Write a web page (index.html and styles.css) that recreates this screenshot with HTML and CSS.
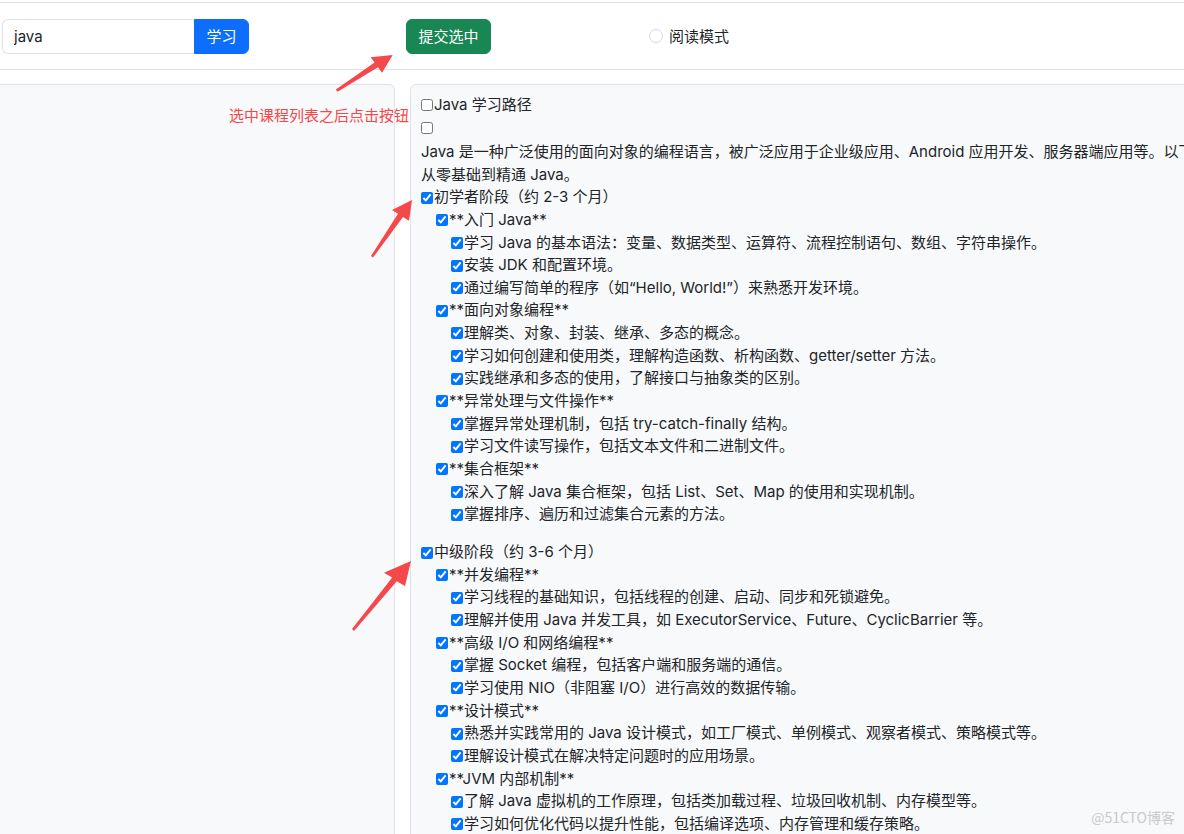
FILE: index.html
```html
<!DOCTYPE html>
<html lang="zh-CN">
<head>
<meta charset="utf-8">
<title>Java 学习路径</title>
<link rel="stylesheet" href="styles.css">
</head>
<body>
<div class="topline"></div>
<div class="toolbar">
  <div class="search">
    <input class="search-input" type="text" value="java">
    <button class="btn btn-primary">学习</button>
  </div>
  <button class="btn btn-success">提交选中</button>
  <label class="mode"><input class="mode-radio" type="radio">阅读模式</label>
</div>
<div class="main">
  <aside class="side"></aside>
  <section class="content">
    <label class="row"><input type="checkbox">Java 学习路径</label>
    <label class="row"><input type="checkbox"></label>
    <p class="intro">Java 是一种广泛使用的面向对象的编程语言，被广泛应用于企业级应用、Android 应用开发、服务器端应用等。以下是详细的 Java 学习路径，帮助你<br>从零基础到精通 Java。</p>
    <div class="stage">
      <label class="row"><input type="checkbox" checked>初学者阶段（约 2-3 个月）</label>
      <label class="row l1"><input type="checkbox" checked>**入门 Java**</label>
      <label class="row l2"><input type="checkbox" checked>学习 Java 的基本语法：变量、数据类型、运算符、流程控制语句、数组、字符串操作。</label>
      <label class="row l2"><input type="checkbox" checked>安装 JDK 和配置环境。</label>
      <label class="row l2"><input type="checkbox" checked>通过编写简单的程序（如“Hello, World!”）来熟悉开发环境。</label>
      <label class="row l1"><input type="checkbox" checked>**面向对象编程**</label>
      <label class="row l2"><input type="checkbox" checked>理解类、对象、封装、继承、多态的概念。</label>
      <label class="row l2"><input type="checkbox" checked>学习如何创建和使用类，理解构造函数、析构函数、getter/setter 方法。</label>
      <label class="row l2"><input type="checkbox" checked>实践继承和多态的使用，了解接口与抽象类的区别。</label>
      <label class="row l1"><input type="checkbox" checked>**异常处理与文件操作**</label>
      <label class="row l2"><input type="checkbox" checked>掌握异常处理机制，包括 try-catch-finally 结构。</label>
      <label class="row l2"><input type="checkbox" checked>学习文件读写操作，包括文本文件和二进制文件。</label>
      <label class="row l1"><input type="checkbox" checked>**集合框架**</label>
      <label class="row l2"><input type="checkbox" checked>深入了解 Java 集合框架，包括 List、Set、Map 的使用和实现机制。</label>
      <label class="row l2"><input type="checkbox" checked>掌握排序、遍历和过滤集合元素的方法。</label>
    </div>
    <div class="stage">
      <label class="row"><input type="checkbox" checked>中级阶段（约 3-6 个月）</label>
      <label class="row l1"><input type="checkbox" checked>**并发编程**</label>
      <label class="row l2"><input type="checkbox" checked>学习线程的基础知识，包括线程的创建、启动、同步和死锁避免。</label>
      <label class="row l2"><input type="checkbox" checked>理解并使用 Java 并发工具，如 ExecutorService、Future、CyclicBarrier 等。</label>
      <label class="row l1"><input type="checkbox" checked>**高级 I/O 和网络编程**</label>
      <label class="row l2"><input type="checkbox" checked>掌握 Socket 编程，包括客户端和服务端的通信。</label>
      <label class="row l2"><input type="checkbox" checked>学习使用 NIO（非阻塞 I/O）进行高效的数据传输。</label>
      <label class="row l1"><input type="checkbox" checked>**设计模式**</label>
      <label class="row l2"><input type="checkbox" checked>熟悉并实践常用的 Java 设计模式，如工厂模式、单例模式、观察者模式、策略模式等。</label>
      <label class="row l2"><input type="checkbox" checked>理解设计模式在解决特定问题时的应用场景。</label>
      <label class="row l1"><input type="checkbox" checked>**JVM 内部机制**</label>
      <label class="row l2"><input type="checkbox" checked>了解 Java 虚拟机的工作原理，包括类加载过程、垃圾回收机制、内存模型等。</label>
      <label class="row l2"><input type="checkbox" checked>学习如何优化代码以提升性能，包括编译选项、内存管理和缓存策略。</label>
    </div>
  </section>
</div>

<div class="note">选中课程列表之后点击按钮</div>
<svg class="arrows" width="1184" height="834" viewBox="0 0 1184 834">
  <polygon points="335.8,89.6 374.6,62.6 370.7,57.3 392.7,55 382,72.7 378,67.3 337.6,91.8"/>
  <polygon points="371,256 398,213.7 392,210 412,200 409,220.7 403,217.1 373,257.6"/>
  <polygon points="352,629 392.2,577.4 384,572.7 411,561 405,586 396.8,581.3 354,631"/>
</svg>
<div class="watermark">@51CTO博客</div>
</body>
</html>
```

FILE: styles.css
```css
* {
  box-sizing: border-box;
}

html,
body {
  margin: 0;
  padding: 0;
  overflow: hidden;
  background: #ffffff;
}

body {
  font-family: Inter, "Noto Sans CJK SC", sans-serif;
  font-size: 15px;
  color: #212529;
  position: relative;
  width: 1184px;
  height: 834px;
}

.topline {
  height: 3px;
  border-bottom: 1px solid #dee2e6;
}

.toolbar {
  display: flex;
  align-items: center;
  height: 67px;
  padding-left: 2px;
  border-bottom: 1px solid #dee2e6;
}

.search {
  display: flex;
}

.search-input {
  width: 192px;
  height: 35px;
  padding: 0 11px;
  border: 1px solid #dee2e6;
  border-right: 0;
  border-radius: 6px 0 0 6px;
  font: inherit;
  color: #212529;
  background: #fff;
  outline: none;
}

.btn {
  height: 35px;
  padding: 0 11px;
  border: 1px solid transparent;
  border-radius: 6px;
  font: inherit;
  color: #fff;
  line-height: 1;
}

.btn-primary {
  width: 55px;
  background: #0d6efd;
  border-color: #0d6efd;
  border-radius: 0 6px 6px 0;
}

.btn-success {
  width: 85px;
  margin-left: 157px;
  background: #198754;
  border-color: #198754;
}

.mode {
  display: flex;
  align-items: center;
  gap: 6px;
  margin-left: 158px;
  margin-top: -1px;
  color: #212529;
}

.mode-radio {
  appearance: none;
  -webkit-appearance: none;
  width: 14px;
  height: 14px;
  margin: 0;
  border: 1px solid #d5d8db;
  border-radius: 50%;
  background: #fff;
}

.main {
  display: flex;
  gap: 15px;
  margin-top: 14px;
  height: 820px;
}

.side {
  flex: none;
  width: 395px;
  background: #f8f9fa;
  border: 1px solid #dee2e6;
  border-left: 0;
  border-radius: 0 6px 0 0;
}

.content {
  flex: none;
  width: 1300px;
  padding: 9px 10px;
  background: #f8f9fa;
  border: 1px solid #dee2e6;
  border-radius: 6px 0 0 0;
}

.row {
  display: flex;
  align-items: center;
  height: 22.65px;
  line-height: 22.65px;
  white-space: nowrap;
}

.row input {
  flex: none;
  width: 12px;
  height: 12px;
  margin: 0 1px 0 0;
}

.l1 {
  padding-left: 15px;
}

.l2 {
  padding-left: 30px;
}

.intro {
  margin: 2px 0 0;
  line-height: 22.5px;
}

.stage {
  margin-bottom: 15.3px;
}

.note {
  position: absolute;
  left: 229px;
  top: 104px;
  font-family: "Noto Sans CJK SC", sans-serif;
  font-size: 15px;
  line-height: 22px;
  color: #f5474a;
  white-space: nowrap;
}

.arrows {
  position: absolute;
  left: 0;
  top: 0;
  pointer-events: none;
}

.arrows polygon {
  fill: #f4484a;
}

.watermark {
  position: absolute;
  right: 9px;
  bottom: 7px;
  font-family: "Noto Sans CJK SC", sans-serif;
  font-size: 14px;
  color: #c9cacc;
}
```
